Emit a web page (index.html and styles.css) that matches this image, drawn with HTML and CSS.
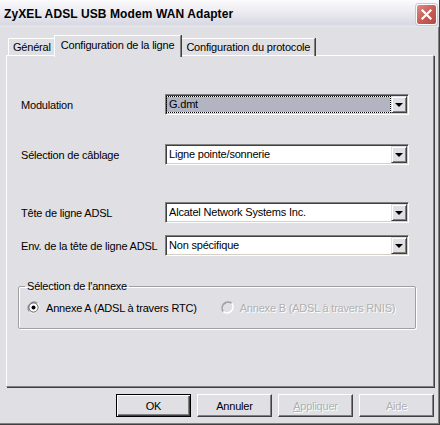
FILE: index.html
```html
<!DOCTYPE html>
<html lang="fr">

<head>
    <meta charset="UTF-8">
    <title>ZyXEL ADSL USB Modem WAN Adapter</title>
    <link rel="stylesheet" href="styles.css">
</head>

<body>
    <div class="window">
        <div class="titlebar">
            <span class="title">ZyXEL ADSL USB Modem WAN Adapter</span>
            <span class="close">
                <svg width="13" height="13" viewBox="0 0 13 13">
                    <path d="M2.5 2.5 L10.5 10.5 M10.5 2.5 L2.5 10.5" stroke="#fff" stroke-width="2.2" stroke-linecap="square" />
                </svg>
            </span>
        </div>

        <div class="content">
            <!-- Tabs -->
            <ul class="tabs">
                <li class="tab">Général</li>
                <li class="tab active">Configuration de la ligne</li>
                <li class="tab">Configuration du protocole</li>
            </ul>

            <div class="panel">
                <div class="row">
                    <span class="label">Modulation</span>
                    <div class="combo">
                        <span class="value focus">G.dmt</span>
                        <span class="drop"><i class="arrow"></i></span>
                    </div>
                </div>

                <div class="row row-cable">
                    <span class="label">Sélection de câblage</span>
                    <div class="combo">
                        <span class="value">Ligne pointe/sonnerie</span>
                        <span class="drop"><i class="arrow"></i></span>
                    </div>
                </div>

                <div class="row row-head">
                    <span class="label">Tête de ligne ADSL</span>
                    <div class="combo">
                        <span class="value">Alcatel Network Systems Inc.</span>
                        <span class="drop"><i class="arrow"></i></span>
                    </div>
                </div>

                <div class="row row-env">
                    <span class="label">Env. de la tête de ligne ADSL</span>
                    <div class="combo">
                        <span class="value">Non spécifique</span>
                        <span class="drop"><i class="arrow"></i></span>
                    </div>
                </div>

                <!-- Annex group -->
                <fieldset class="group">
                    <legend>Sélection de l'annexe</legend>
                    <div class="radios">
                        <span class="radio">
                            <svg width="13" height="13" viewBox="0 0 13 13">
                                <path d="M2.3 10.7 A6 6 0 0 1 10.7 2.3" fill="none" stroke="#808080" stroke-width="1" />
                                <path d="M10.7 2.3 A6 6 0 0 1 2.3 10.7" fill="none" stroke="#ffffff" stroke-width="1" />
                                <circle cx="6.5" cy="6.5" r="4.6" fill="#fff" stroke="#404040" stroke-width="0.8" />
                                <circle cx="6.5" cy="6.5" r="2" fill="#000" />
                            </svg>
                            Annexe A (ADSL à travers RTC)
                        </span>
                        <span class="radio disabled">
                            <svg width="13" height="13" viewBox="0 0 13 13">
                                <path d="M2.3 10.7 A6 6 0 0 1 10.7 2.3" fill="none" stroke="#a0a0a0" stroke-width="1.6" />
                                <path d="M10.7 2.3 A6 6 0 0 1 2.3 10.7" fill="none" stroke="#ffffff" stroke-width="1.6" />
                            </svg>
                            Annexe B (ADSL à travers RNIS)
                        </span>
                    </div>
                </fieldset>
            </div>

            <div class="buttons">
                <button class="btn default">OK</button>
                <button class="btn">Annuler</button>
                <button class="btn disabled"><u>A</u>ppliquer</button>
                <button class="btn disabled">Aide</button>
            </div>
        </div>
    </div>
</body>

</html>
```

FILE: styles.css
```css
/* General styling */
body {
    margin: 0;
    font-family: "Liberation Sans", Arial, sans-serif;
    font-size: 11px;
    color: #000;
    background: #e0dfe3;
}

.window {
    width: 440px;
    height: 425px;
    box-sizing: border-box;
    background-color: #e0dfe3;
    border-right: 1px solid #404040;
    border-bottom: 1px solid #404040;
    box-shadow: inset -1px -1px 0 #808080;
    display: flex;
    flex-direction: column;
    overflow: hidden;
}

/* Title bar */
.titlebar {
    flex-shrink: 0;
    height: 27px;
    display: flex;
    align-items: center;
    justify-content: space-between;
    padding: 0 2px 0 4px;
    background: linear-gradient(#fbfbfd, #ebebf1 45%, #d9d9e3 90%, #e8e8ee);
}

.title {
    font-weight: bold;
    font-size: 12px;
    color: #000;
    letter-spacing: 0.1px;
}

.close {
    width: 19px;
    height: 19px;
    border: 1px solid #fff;
    border-radius: 3px;
    background: linear-gradient(135deg, #dc8c84, #c65b54 55%, #b44a44);
    box-shadow: 0 0 0 1px #c8c8d4;
    display: flex;
    align-items: center;
    justify-content: center;
    margin-top: 1px;
}

/* Tabs */
.content {
    flex-shrink: 0;
    padding: 8px 5px 0 6px;
}

.tabs {
    list-style-type: none;
    margin: 0;
    padding: 0 0 0 2px;
    display: flex;
    align-items: flex-start;
    height: 21px;
    position: relative;
    z-index: 1;
}

.tab {
    height: 17px;
    margin-top: 3px;
    padding: 0 4px;
    line-height: 17px;
    border-top: 1px solid #fff;
    border-left: 1px solid #fff;
    border-right: 1px solid #808080;
    box-shadow: 1px 0 0 #404040;
    letter-spacing: -0.2px;
}

.tab.active {
    height: 21px;
    margin: 0 -1px 0 -2px;
    padding: 0 6px;
    line-height: 18px;
    background-color: #e0dfe3;
    position: relative;
    z-index: 2;
}

.tab.active + .tab {
    margin-left: 1px;
}

.panel {
    height: 332px;
    box-sizing: border-box;
    margin-top: -1px;
    padding: 38px 0 0 14px;
    border-top: 1px solid #fff;
    border-left: 1px solid #fff;
    border-right: 1px solid #808080;
    border-bottom: 1px solid #808080;
    box-shadow: 1px 1px 0 #404040;
}

/* Rows */
.row {
    display: flex;
    align-items: center;
    height: 21px;
}

.row-cable {
    margin-top: 29px;
}

.row-head {
    margin-top: 37px;
}

.row-env {
    margin-top: 12px;
}

.label {
    width: 144px;
    letter-spacing: -0.2px;
}

.combo {
    width: 244px;
    height: 21px;
    box-sizing: border-box;
    display: flex;
    padding: 1px;
    background: #fff;
    border: 1px solid;
    border-color: #808080 #fff #fff #808080;
    box-shadow: inset 1px 1px 0 #404040, inset -1px -1px 0 #d4d0c8;
}

.value {
    flex: 1;
    padding-left: 2px;
    line-height: 17px;
    letter-spacing: -0.2px;
}

.value.focus {
    margin: 1px 1px 1px 0;
    line-height: 15px;
    background-color: #b2b4c2;
    outline: 1px dotted #000;
}

.drop {
    width: 16px;
    height: 17px;
    box-sizing: border-box;
    background-color: #e0dfe3;
    border: 1px solid;
    border-color: #e0dfe3 #404040 #404040 #e0dfe3;
    box-shadow: inset 1px 1px 0 #fff, inset -1px -1px 0 #808080;
    display: flex;
    align-items: center;
    justify-content: center;
}

.arrow {
    width: 0;
    height: 0;
    border-left: 4px solid transparent;
    border-right: 4px solid transparent;
    border-top: 4px solid #000;
    margin-top: 1px;
}

/* Group box */
.group {
    width: 398px;
    box-sizing: border-box;
    height: 49px;
    margin: 24px 0 0 -3px;
    padding: 0 6px;
    border: 1px solid #a0a0a0;
    border-radius: 2px;
    box-shadow: 1px 1px 0 #fff, inset 1px 1px 0 #fff;
}

.group legend {
    padding: 0 2px;
    line-height: 13px;
    letter-spacing: -0.2px;
}

.radios {
    display: flex;
    padding: 8px 0 0 2px;
}

.radio {
    display: flex;
    align-items: center;
    gap: 4px;
    letter-spacing: -0.2px;
}

.radio svg {
    margin-right: 2px;
}

.radio.disabled {
    margin-left: 24px;
    color: #b0b0b0;
    text-shadow: 1px 1px 0 #fff;
}

/* Buttons */
.buttons {
    display: flex;
    justify-content: flex-end;
    gap: 6px;
    margin-top: 7px;
}

.btn {
    width: 75px;
    height: 23px;
    padding: 0;
    font-family: "Liberation Sans", Arial, sans-serif;
    font-size: 11px;
    letter-spacing: -0.2px;
    color: #000;
    background-color: #e0dfe3;
    border: 1px solid;
    border-color: #fff #404040 #404040 #fff;
    box-shadow: inset -1px -1px 0 #808080;
}

.btn.default {
    border: 1px solid #000;
    box-shadow: inset 1px 1px 0 #fff, inset -1px -1px 0 #404040, inset -2px -2px 0 #808080;
}

.btn.disabled {
    color: #b0b0b0;
    text-shadow: 1px 1px 0 #fff;
}
```
